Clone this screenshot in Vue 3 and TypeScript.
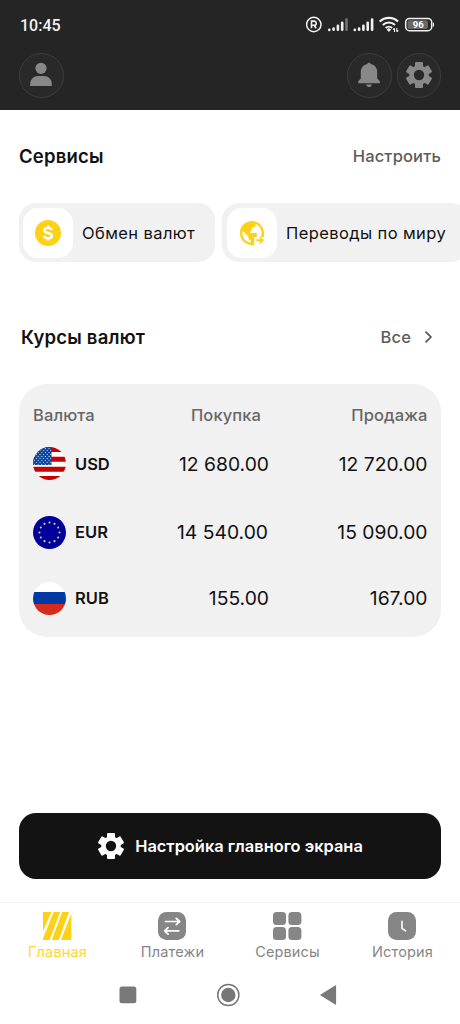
<script setup lang="ts">
interface Rate {
  code: 'USD' | 'EUR' | 'RUB'
  buy: string
  sell: string
}

interface Tab {
  id: string
  label: string
}

const rates: Rate[] = [
  { code: 'USD', buy: '12 680.00', sell: '12 720.00' },
  { code: 'EUR', buy: '14 540.00', sell: '15 090.00' },
  { code: 'RUB', buy: '155.00', sell: '167.00' },
]

const tabs: Tab[] = [
  { id: 'home', label: 'Главная' },
  { id: 'payments', label: 'Платежи' },
  { id: 'catalog', label: 'Сервисы' },
  { id: 'history', label: 'История' },
]

const teeth = [0, 60, 120, 180, 240, 300]

const stars = Array.from({ length: 12 }, (_, i) => {
  const a = (i * Math.PI) / 6
  return { x: 16.5 + 10 * Math.sin(a), y: 16.5 - 10 * Math.cos(a) }
})

const cantonStars = Array.from({ length: 45 }, (_, i) => ({
  x: 1.6 + (i % 5) * 3.6 + (Math.floor(i / 5) % 2) * 1.8,
  y: 1.6 + Math.floor(i / 5) * 1.95,
}))
</script>

<template>
  <div class="screen">
    <header class="top">
      <div class="status">
        <span class="clock">10:45</span>
        <svg width="128" height="20" viewBox="306 14 128 20">
          <circle cx="313.8" cy="24.5" r="7.2" fill="none" stroke="#f2f2f2" stroke-width="1.5" />
          <path d="M311.5 28.3v-7.2h2.7a2 2 0 0 1 0 4.1h-2.7m2.5 0 2.2 3.1" fill="none" stroke="#f2f2f2" stroke-width="1.6" />
          <g stroke="#f2f2f2" stroke-width="2.6" stroke-linecap="round">
            <path d="M329.3 29.8v.1M333.6 29.8v-1.2M337.9 29.8v-4M342.2 29.8v-7" />
            <path d="M346.5 29.8v-10.2" stroke="#747474" />
            <path d="M354.8 29.8v.1M359.1 29.8v-1.2M363.4 29.8v-4M367.7 29.8v-7M372.1 29.8v-10.2" />
          </g>
          <g fill="none" stroke="#f2f2f2" stroke-width="2.1">
            <path d="M379.7 21.6a13.2 13.2 0 0 1 18.4 0" />
            <path d="M382.8 25.1a8.6 8.6 0 0 1 12.2 0" />
            <path d="M385.7 28a4.7 4.7 0 0 1 6.4 0" />
          </g>
          <path d="m386.7 29.6 2.2-1.5 2.2 1.5-2.2 2.5z" fill="#f2f2f2" />
          <path d="M394.5 32v-3.6m-1.5 1.3 1.5-1.6M396.8 28v3.700m1.5-1.4-1.5 1.6" fill="none" stroke="#f2f2f2" stroke-width="1.1" />
          <rect x="405.7" y="18.500" width="26" height="12.200" rx="3.8" fill="none" stroke="#f2f2f2" stroke-width="1.500" />
          <rect x="407.500" y="20.200" width="20.500" height="8.800" rx="2" fill="#686868" />
          <path d="M433.500 22.800v3.600" stroke="#f2f2f2" stroke-width="1.300" />
          <text x="418.300" y="28.100" text-anchor="middle" class="charge">96</text>
        </svg>
      </div>
      <div class="actions">
        <button class="round" type="button" aria-label="Профиль">
          <svg width="44" height="44" viewBox="0 0 44 44" fill="#888">
            <circle cx="22" cy="15.3" r="5.6" />
            <path d="M11.2 33v-2.2a7.700 7.700 0 0 1 7.700-7.700h6.200a7.700 7.700 0 0 1 7.700 7.700V33z" />
          </svg>
        </button>
        <div class="pair">
          <button class="round" type="button" aria-label="Уведомления">
            <svg width="44" height="44" viewBox="0 0 44 44" fill="#888">
              <path d="M22 9.800c1 0 1.600.7 1.800 1.200 3.900.8 6.400 4 6.400 8v6.500l2.600 2.700v2h-21.600v-2l2.600-2.700V19c0-4 2.500-7.200 6.400-8 .2-.5.8-1.200 1.800-1.200z" />
              <path d="M19.300 31.600h5.400a2.700 2.300 0 0 1-5.400 0z" />
            </svg>
          </button>
          <button class="round" type="button" aria-label="Настройки">
            <svg width="28" height="28" viewBox="-14 -14 28 28" fill="#888">
              <circle r="7.500" fill="none" stroke="#888" stroke-width="4.600" />
              <rect v-for="t in teeth" :key="t" x="-4" y="-13" width="8" height="5.600" rx="1" :transform="`rotate(${t})`" />
            </svg>
          </button>
        </div>
      </div>
    </header>

    <main class="body">
      <div class="heading services-heading">
        <h2>Сервисы</h2>
        <a class="link">Настроить</a>
      </div>

      <div class="services">
        <div class="service">
          <span class="tile">
            <svg width="26" height="26" viewBox="0 0 26 26">
              <circle cx="13" cy="13" r="13" fill="#fdd116" />
              <path d="M16.900 10c-.6-1.400-2-2-3.900-2-2.200 0-3.700.9-3.700 2.400 0 3.500 7.600 1.700 7.600 5.300 0 1.600-1.600 2.500-3.900 2.500-2.100 0-3.500-.8-4-2.200M13 5.600v2M13 18.300v2.200" fill="none" stroke="#fff" stroke-width="2.500" />
            </svg>
          </span>
          <span class="service-name">Обмен валют</span>
        </div>
        <div class="service wide">
          <span class="tile">
            <svg width="26" height="26" viewBox="1.200 1.200 21.600 21.600">
              <path fill="#fdd116" d="M12 2C6.480 2 2 6.480 2 12s4.480 10 10 10h2v-6.500h8V12c0-5.520-4.480-10-10-10zm-1 17.930c-3.950-.49-7-3.850-7-7.930 0-.62.080-1.210.210-1.790L9 15v1c0 1.100.9 2 2 2v1.930zM16 16v-3c0-.55-.45-1-1-1h-4.500V10.500c.8-.2 1.300-.7 1.300-1.500V7.500H13c1.100 0 2-.9 2-2v-.91c2.930 1.190 5 4.060 5 7.410 0 1.500-.4 2.900-1.100 4z" />
              <path fill="#fff" d="M14 15.300h9V23h-9z" />
              <path d="M15.600 18h5m-2.200-2.500 2.500 2.500-2.500 2.500" fill="none" stroke="#fdd116" stroke-width="1.500" />
            </svg>
          </span>
          <span class="service-name">Переводы по миру</span>
        </div>
      </div>

      <div class="heading rates-heading">
        <h2>Курсы валют</h2>
        <a class="link all">
          <span>Все</span>
          <svg width="9" height="14" viewBox="0 0 9 14"><path d="m1.500 1.600 5.400 5.400-5.400 5.400" fill="none" stroke="#555" stroke-width="1.700" /></svg>
        </a>
      </div>

      <section class="rates">
        <div class="row labels">
          <span>Валюта</span>
          <span class="l-buy">Покупка</span>
          <span class="l-sell">Продажа</span>
        </div>
        <div v-for="rate in rates" :key="rate.code" class="row rate" :class="rate.code.toLowerCase()">
          <span class="currency">
            <svg class="flag" width="33" height="33" viewBox="0 0 33 33">
              <template v-if="rate.code === 'USD'">
                <rect width="33" height="33" fill="#fff" />
                <path d="M0 2.500h33M0 12.300h33M0 22.300h33M0 31.500h33" stroke="#c90000" stroke-width="5" />
                <rect width="18.500" height="18" fill="#0b479d" />
                <circle v-for="(s, i) in cantonStars" :key="i" :cx="s.x" :cy="s.y" r=".55" fill="#e8eefa" />
              </template>
              <template v-else-if="rate.code === 'EUR'">
                <rect width="33" height="33" fill="#00009c" />
                <circle v-for="(s, i) in stars" :key="i" :cx="s.x" :cy="s.y" r="1.050" fill="#e3cc88" />
              </template>
              <template v-else>
                <rect width="33" height="10" fill="#fff" />
                <rect y="10" width="33" height="12" fill="#0039a6" />
                <rect y="22" width="33" height="11" fill="#d52b1e" />
              </template>
            </svg>
            <span class="code">{{ rate.code }}</span>
          </span>
          <span class="amount buy">{{ rate.buy }}</span>
          <span class="amount">{{ rate.sell }}</span>
        </div>
      </section>

      <button class="customize" type="button">
        <svg width="28" height="28" viewBox="-14 -14 28 28" fill="#fff">
          <circle r="7.500" fill="none" stroke="#fff" stroke-width="4.600" />
          <rect v-for="t in teeth" :key="t" x="-4" y="-13" width="8" height="5.600" rx="1" :transform="`rotate(${t})`" />
        </svg>
        <span>Настройка главного экрана</span>
      </button>
    </main>

    <nav class="tabs">
      <a v-for="tab in tabs" :key="tab.id" class="tab" :class="tab.id">
        <svg width="28.500" height="28" viewBox="0 0 28.500 28" fill="#868686">
          <g v-if="tab.id === 'home'" fill="#fdd116">
            <path d="M0 0h8.400L0 19.500z" />
            <path d="M10.600 0h6.600L6.600 28H0v-1.500z" />
            <path d="M19.200 0h6.800L15.800 28H8.800z" />
            <path d="M28.300 1.500V28H18z" />
          </g>
          <template v-else-if="tab.id === 'payments'">
            <rect width="28" height="28" rx="8.500" />
            <path d="M7.500 9.500h14m-3.300-3.200 3.500 3.200-3.500 3.200M20.800 18.900h-14m3.300-3.200-3.500 3.200 3.500 3.200" fill="none" stroke="#fff" stroke-width="1.700" stroke-linecap="round" stroke-linejoin="round" />
          </template>
          <template v-else-if="tab.id === 'catalog'">
            <rect width="13" height="13" rx="3.500" />
            <rect x="15.400" width="13" height="13" rx="3.500" />
            <rect y="15" width="13" height="13" rx="3.500" />
            <rect x="15.400" y="15" width="13" height="13" rx="3.500" />
          </template>
          <template v-else>
            <rect width="28" height="28" rx="8.500" />
            <path d="M14 9.300v7l3.600 2.500" fill="none" stroke="#fff" stroke-width="1.600" stroke-linecap="round" />
          </template>
        </svg>
        <span>{{ tab.label }}</span>
      </a>
    </nav>

    <footer class="system">
      <svg width="220" height="26" viewBox="118 982 220 26">
        <rect x="119.500" y="986.500" width="16.800" height="16.800" rx="2.500" fill="#797979" />
        <circle cx="228.300" cy="995" r="10.600" fill="none" stroke="#777" stroke-width="1.500" />
        <circle cx="228.300" cy="995" r="7.200" fill="#777" />
        <path d="M321 994.900 335.500 985.900V1004z" fill="#797979" stroke="#797979" stroke-width="1.200" stroke-linejoin="round" />
      </svg>
    </footer>
  </div>
</template>

<style>
body {
  background: #fff;
}
</style>

<style scoped>
.screen {
  width: 460px;
  height: 1024px;
  overflow: hidden;
  display: flex;
  flex-direction: column;
  background: #fff;
  color: #111;
  font-family: Inter, "Liberation Sans", sans-serif;
  white-space: nowrap;
}
button {
  padding: 0;
  border: 0;
  font: inherit;
}
svg {
  display: block;
  flex: none;
}
.top {
  height: 110px;
  flex: none;
  background: #252525;
}
.status {
  height: 53px;
  display: flex;
  justify-content: space-between;
  padding: 14px 26px 0 20px;
  box-sizing: border-box;
}
.clock {
  font: 500 16px/23px Roboto, sans-serif;
  color: #f2f2f2;
}
.charge {
  font: 700 9.5px Roboto, sans-serif;
  fill: #fff;
}
.actions {
  display: flex;
  justify-content: space-between;
  padding: 0 19px;
}
.pair {
  display: flex;
  gap: 5px;
}
.round {
  width: 44.5px;
  height: 44.5px;
  display: flex;
  align-items: center;
  justify-content: center;
  box-sizing: border-box;
  border: 1px solid #3c3c3c;
  border-radius: 50%;
  background: #292929;
}
.body {
  height: 792px;
  flex: none;
}
.heading {
  display: flex;
  justify-content: space-between;
  align-items: center;
  height: 30px;
}
.services-heading {
  padding: 31px 19px 0;
}
h2 {
  margin: 0;
  font-size: 18.5px;
  font-weight: 600;
  letter-spacing: 0.2px;
}
.link {
  font-size: 16.5px;
  font-weight: 500;
  letter-spacing: 0.15px;
  color: #5c5c5c;
}
.services {
  display: flex;
  gap: 7px;
  margin: 32px 0 0 19px;
}
.service {
  flex: none;
  box-sizing: border-box;
  width: 196px;
  height: 59px;
  padding-left: 4px;
  border-radius: 17px;
  display: flex;
  align-items: center;
  background: #f1f1f1;
}
.service.wide {
  width: 246px;
  padding-left: 5px;
}
.tile {
  width: 50px;
  height: 50px;
  border-radius: 15px;
  background: #fff;
  display: flex;
  align-items: center;
  justify-content: center;
}
.service-name {
  margin-left: 9px;
  font-size: 16.5px;
  letter-spacing: 0.4px;
}
.rates-heading {
  margin-top: 60px;
  padding: 0 27px 0 21px;
}
.all {
  display: flex;
  align-items: center;
  gap: 13px;
}
.rates {
  margin: 32px 19px 0;
  padding: 16px 13.5px 0 14px;
  box-sizing: border-box;
  height: 253px;
  border-radius: 28px;
  background: #f1f1f1;
}
.row {
  display: grid;
  grid-template-columns: 110px 126px 1fr;
  align-items: center;
}
.labels {
  height: 29px;
  font-size: 16.5px;
  font-weight: 500;
  letter-spacing: 0.1px;
  color: #666;
}
.l-buy {
  text-align: right;
  padding-right: 8px;
}
.l-sell {
  text-align: right;
}
.rate {
  height: 68px;
}
.rate.usd {
  height: 69px;
}
.rate.rub {
  height: 64px;
}
.currency {
  display: flex;
  align-items: center;
  gap: 9px;
}
.flag {
  border-radius: 50%;
}
.code {
  font-size: 16.5px;
  font-weight: 600;
}
.amount {
  font-size: 19.3px;
  text-align: right;
}
.eur .buy {
  padding-right: 1px;
}
.customize {
  margin: 176px 0 0 19px;
  width: 422px;
  height: 66px;
  border-radius: 17px;
  background: #131313;
  color: #fff;
  display: flex;
  align-items: center;
  justify-content: center;
  gap: 10px;
  font-size: 16.4px;
  font-weight: 600;
}
.tabs {
  height: 64px;
  flex: none;
  display: grid;
  grid-template-columns: repeat(4, 1fr);
  box-sizing: border-box;
  border-top: 1px solid #f4f4f4;
  padding-top: 9px;
}
.tab {
  display: flex;
  flex-direction: column;
  align-items: center;
  gap: 2px;
  font-size: 14.5px;
  line-height: 20px;
  letter-spacing: 0.15px;
  color: #868686;
}
.tab.home {
  color: #fdd835;
}
.system {
  padding: 16px 0 0 118px;
}
</style>
